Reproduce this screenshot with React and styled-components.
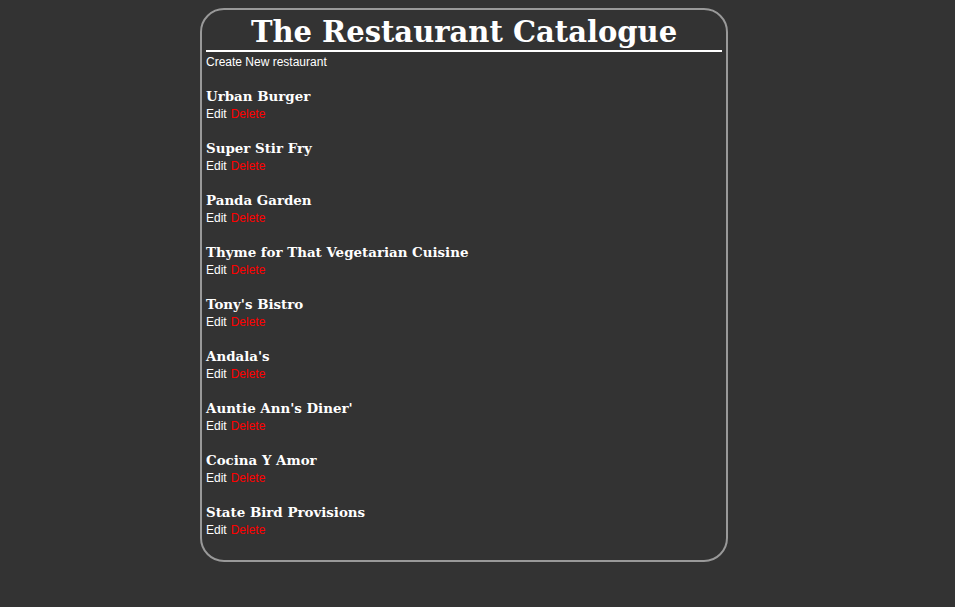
import React from 'react';
import styled, { createGlobalStyle } from 'styled-components';

const GlobalStyle = createGlobalStyle`
  body {
    margin: 8px;
    background-color: #333333;
    color: #ffffff;
    font-family: "Liberation Sans", Arial, sans-serif;
    font-size: 12px;
  }
`;

const Catalogue = styled.div`
  width: 516px;
  height: 550px;
  margin-left: 192px;
  padding: 0 4px;
  border: 2px solid #999999;
  border-radius: 24px;
`;

const Title = styled.h1`
  margin: 4px 0 0;
  font-family: "DejaVu Serif", Georgia, serif;
  font-weight: bold;
  font-size: 29px;
  line-height: 36px;
  text-align: center;
  border-bottom: 2px solid #ffffff;
`;

const CreateLink = styled.a`
  display: block;
  margin-top: 3px;
  line-height: 14px;
  color: #ffffff;
  text-decoration: none;
`;

const List = styled.div`
  display: flex;
  flex-direction: column;
  gap: 18px;
  margin-top: 18px;
`;

const Item = styled.div`
  display: flex;
  flex-direction: column;
`;

const Name = styled.h3`
  margin: 0;
  font-family: "DejaVu Serif", Georgia, serif;
  font-weight: bold;
  font-size: 13.4px;
  line-height: 18px;
`;

const Actions = styled.div`
  margin-top: 2px;
  line-height: 14px;
  display: flex;
  gap: 4px;
`;

const ActionLink = styled.a`
  color: ${(p) => (p.$danger ? '#ff0000' : '#ffffff')};
  text-decoration: none;
`;

const restaurants = [
  'Urban Burger',
  'Super Stir Fry',
  'Panda Garden',
  'Thyme for That Vegetarian Cuisine',
  "Tony's Bistro",
  "Andala's",
  "Auntie Ann's Diner'",
  'Cocina Y Amor',
  'State Bird Provisions',
];

export default function App() {
  return (
    <>
      <GlobalStyle />
      <Catalogue>
        <Title>The Restaurant Catalogue</Title>
        <CreateLink href="#">Create New restaurant</CreateLink>
        <List>
          {restaurants.map((name) => (
            <Item key={name}>
              <Name>{name}</Name>
              <Actions>
                <ActionLink href="#">Edit</ActionLink>
                <ActionLink href="#" $danger>Delete</ActionLink>
              </Actions>
            </Item>
          ))}
        </List>
      </Catalogue>
    </>
  );
}
